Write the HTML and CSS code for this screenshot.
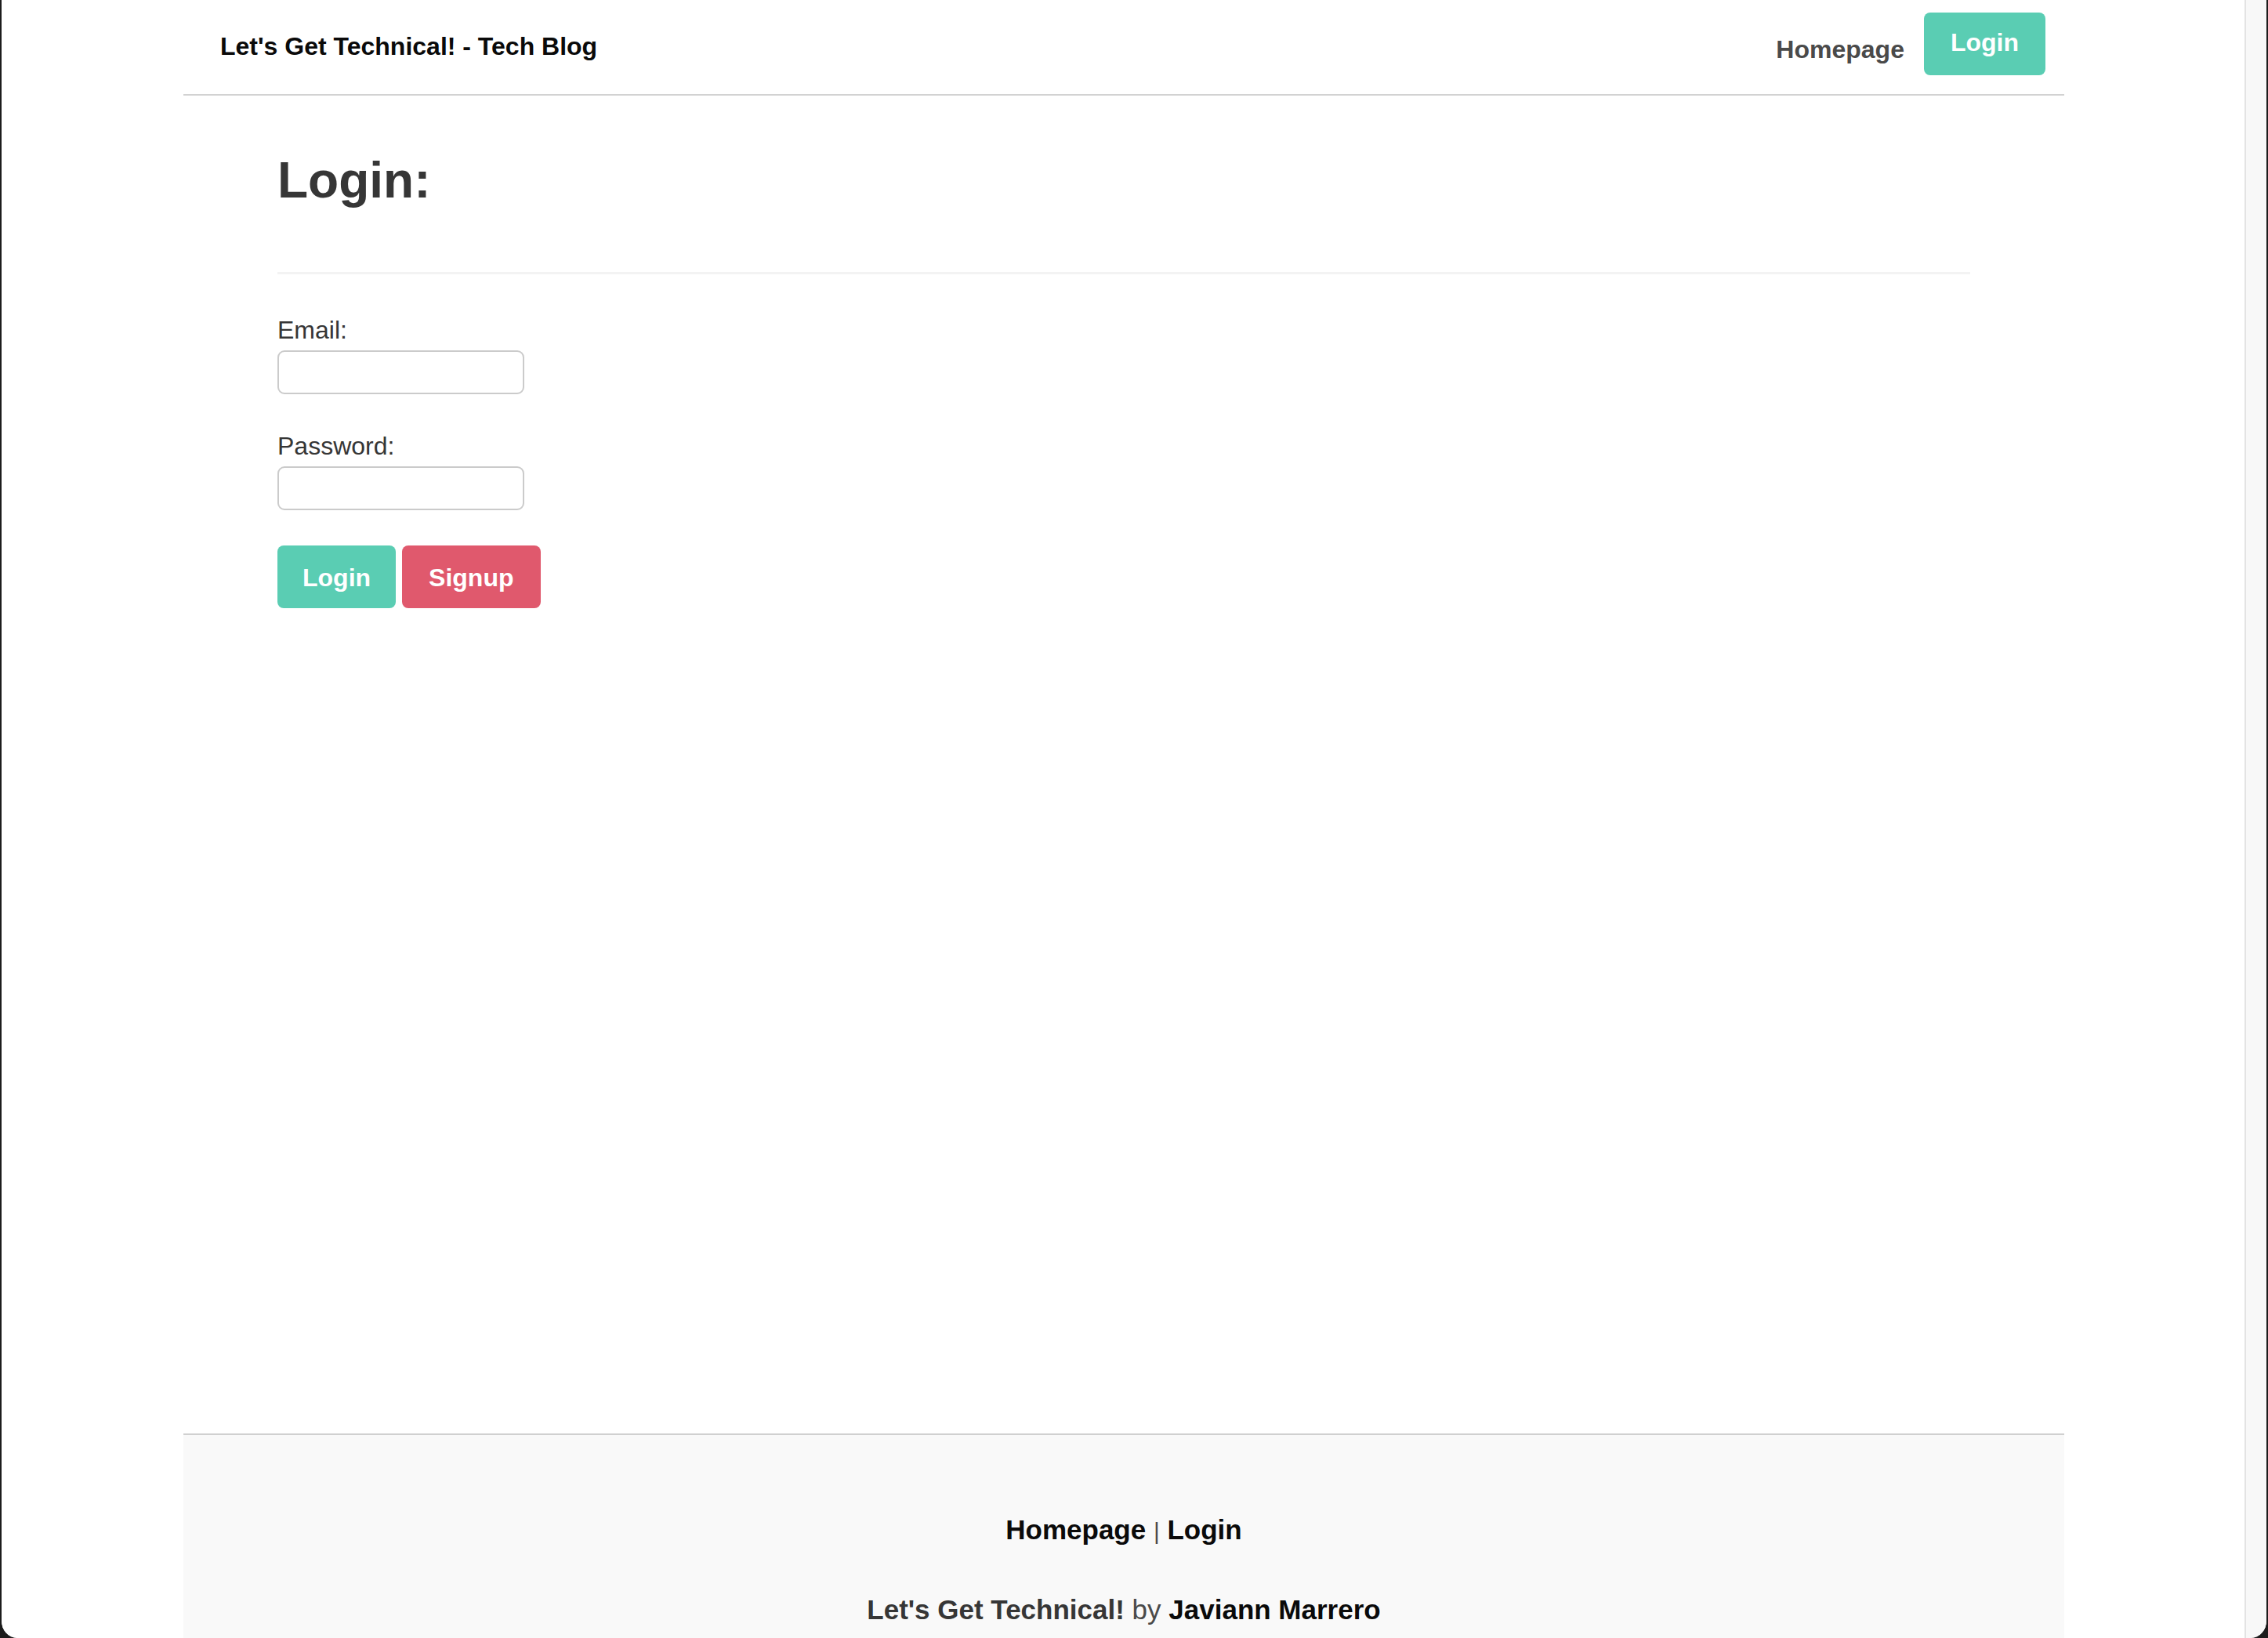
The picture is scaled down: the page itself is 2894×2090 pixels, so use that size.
FILE: index.html
```html
<!DOCTYPE html>
<html lang="en">
<head>
<meta charset="utf-8">
<title>Let's Get Technical! - Tech Blog</title>
<link rel="stylesheet" href="styles.css">
</head>
<body>
<div class="window">
  <div class="viewport">
    <div class="page">
      <header class="site-header">
        <a class="brand" href="#">Let's Get Technical! - Tech Blog</a>
        <nav class="nav">
          <a class="nav-link" href="#">Homepage</a>
          <a class="nav-button" href="#">Login</a>
        </nav>
      </header>
      <main class="content">
        <h1 class="title">Login:</h1>
        <div class="rule"></div>
        <form class="login-form">
          <label class="label" for="email">Email:</label>
          <input class="input" id="email" type="email">
          <label class="label label-second" for="password">Password:</label>
          <input class="input" id="password" type="password">
          <div class="buttons">
            <button type="button" class="btn btn-login">Login</button>
            <button type="button" class="btn btn-signup">Signup</button>
          </div>
        </form>
      </main>
      <footer class="site-footer">
        <p class="footer-links"><a href="#">Homepage</a> <span class="sep">|</span> <a href="#">Login</a></p>
        <p class="footer-credit"><strong class="credit-site">Let's Get Technical!</strong> by <strong class="credit-author">Javiann Marrero</strong></p>
      </footer>
    </div>
  </div>
  <div class="scrollbar"></div>
</div>
</body>
</html>
```

FILE: styles.css
```css
html {
  background: #1c1c1c;
}
body {
  margin: 0;
  overflow: hidden;
  font-family: "Liberation Sans", Arial, sans-serif;
  color: #4a4a4a;
}
a {
  text-decoration: none;
}
.window {
  display: flex;
  height: 2090px;
  background: #ffffff;
  border-left: 2px solid #1c1c1c;
  border-right: 2px solid #1c1c1c;
  border-radius: 0 0 22px 22px;
  overflow: hidden;
}
.viewport {
  flex: 1;
  overflow: hidden;
  background: #ffffff;
}
.scrollbar {
  width: 26px;
  border-left: 2px solid #e3e3e3;
  background: #f8f8f8;
}
.page {
  width: 2400px;
  margin: 0 auto;
  padding-left: 2px;
}
.site-header {
  display: flex;
  justify-content: space-between;
  align-items: flex-start;
  height: 120px;
  border-bottom: 2px solid #d2d2d2;
  padding: 0 24px 0 47px;
}
.brand {
  margin-top: 39px;
  font-size: 32px;
  line-height: 40px;
  font-weight: 700;
  color: #0a0a0a;
}
.nav {
  display: flex;
  align-items: flex-start;
  gap: 25px;
}
.nav-link {
  margin-top: 43px;
  font-size: 32px;
  line-height: 40px;
  font-weight: 700;
  color: #4a4a4a;
}
.nav-button {
  margin-top: 16px;
  padding: 18px 34px 22px;
  font-size: 32px;
  line-height: 40px;
  font-weight: 700;
  color: #ffffff;
  background: #5acdb3;
  border-radius: 8px;
}
.content {
  min-height: 1707px;
  padding: 72px 120px 0 120px;
  box-sizing: border-box;
}
.title {
  margin: 0;
  font-size: 64px;
  line-height: 72px;
  font-weight: 700;
  color: #363636;
}
.rule {
  height: 3px;
  margin-top: 81px;
  background: #f3f3f3;
}
.login-form {
  display: flex;
  flex-direction: column;
  align-items: flex-start;
  padding-top: 47px;
}
.label {
  display: block;
  font-size: 32px;
  line-height: 48px;
  color: #363636;
}
.label-second {
  margin-top: 42px;
}
.input {
  width: 315px;
  height: 56px;
  margin: 2px 0 0;
  box-sizing: border-box;
  border: 2px solid #cbcbcb;
  border-radius: 9px;
  background: #ffffff;
  font-size: 28px;
  padding: 0 12px;
}
.buttons {
  display: flex;
  gap: 8px;
  margin-top: 45px;
}
.btn {
  height: 80px;
  padding: 2px 34px 0;
  border: none;
  border-radius: 8px;
  font-family: "Liberation Sans", Arial, sans-serif;
  font-size: 32px;
  font-weight: 700;
  line-height: 40px;
  color: #ffffff;
}
.btn-login {
  background: #5acdb3;
  padding-left: 32px;
  padding-right: 32px;
}
.btn-signup {
  background: #e0596d;
}
.site-footer {
  border-top: 2px solid #d0d0d0;
  background: #f9f9f9;
  padding: 97px 0 100px;
  text-align: center;
}
.footer-links {
  margin: 0;
  font-size: 35px;
  line-height: 48px;
  font-weight: 700;
}
.footer-links a {
  color: #0a0a0a;
}
.sep {
  font-weight: 400;
  font-size: 30px;
  color: #4a4a4a;
}
.footer-credit {
  margin: 52px 0 0;
  font-size: 35px;
  line-height: 48px;
  color: #4a4a4a;
}
.credit-site {
  color: #363636;
}
.credit-author {
  color: #0a0a0a;
}
```
